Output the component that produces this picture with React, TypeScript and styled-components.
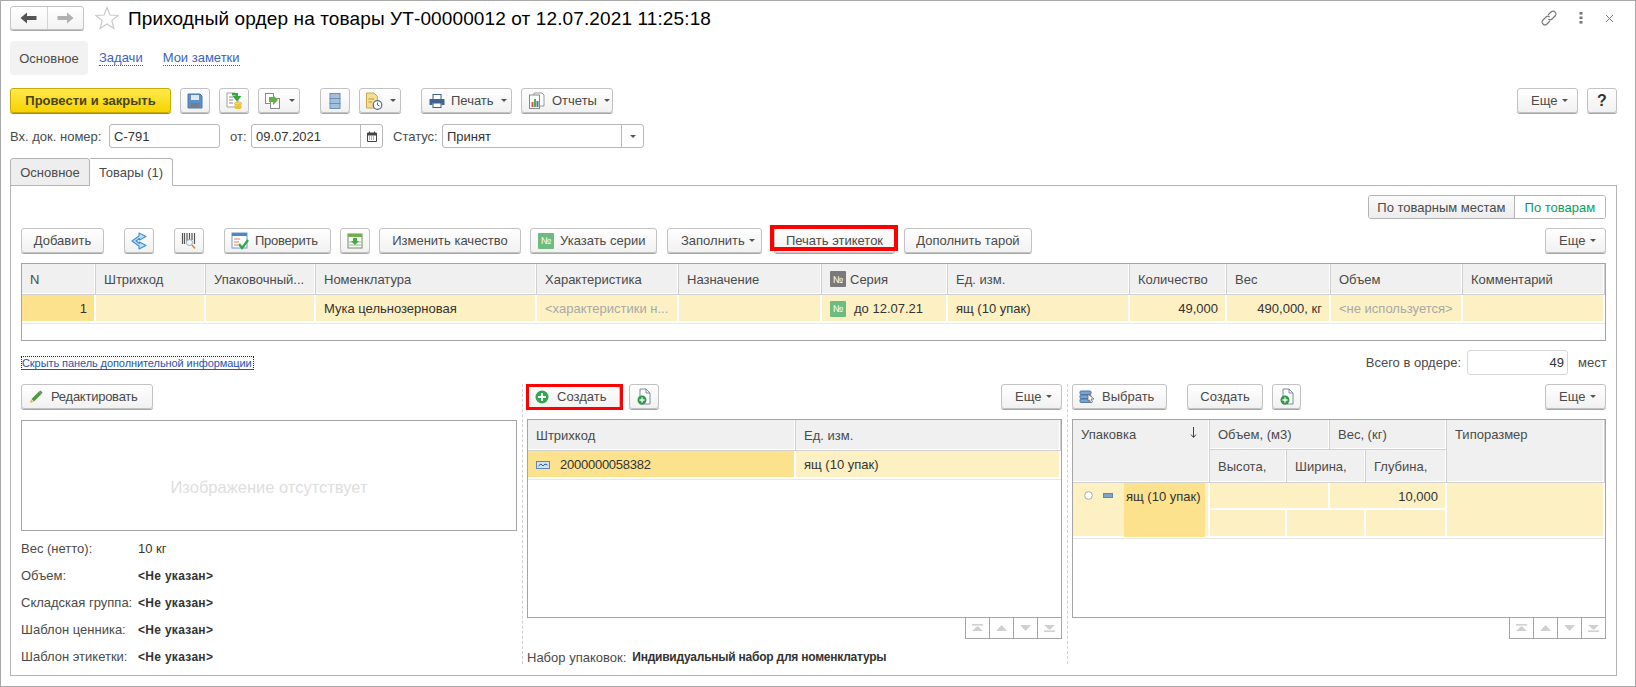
import React from "react";
import styled, { createGlobalStyle } from "styled-components";

const Global = createGlobalStyle`
  html, body { margin: 0; padding: 0; background: #fff; }
  body { font-family: "Liberation Sans", Arial, sans-serif; font-size: 13px; color: #4a4a4a; }
  * { box-sizing: border-box; }
`;

const Frame = styled.div`
  width: 1636px; height: 687px; border: 1px solid #a9a9a9; background: #fff;
  display: flex; flex-direction: column; overflow: hidden;
`;
const TitleRow = styled.div`
  display: flex; align-items: center; height: 24px; margin-top: 5px; padding: 0 21px 0 9px;
`;
const NavPair = styled.div`
  display: flex; width: 74px; height: 24px; border: 1px solid #c4c4c4; border-radius: 3px;
  background: linear-gradient(#fff, #f3f3f3); box-shadow: 0 1px 0 #a8a8a8;
`;
const NavPart = styled.div<{ $line?: boolean }>`
  flex: 1; display: flex; align-items: center; justify-content: center;
  border-left: ${(p) => (p.$line ? "1px solid #d4d4d4" : "none")};
`;
const StarBox = styled.div`margin: 0 9px 0 11px; display: flex;`;
const Title = styled.div`font-size: 19px; color: #000; white-space: nowrap; letter-spacing: 0.12px; padding-top: 2px;`;
const TitleTools = styled.div`margin-left: auto; display: flex; align-items: center; gap: 22px;`;
const NavTabs = styled.div`display: flex; align-items: center; margin: 11px 0 0 9px; height: 34px;`;
const NavActive = styled.div`
  width: 78px; height: 34px; background: #f2f2f2; border-radius: 4px; display: flex; align-items: center;
  justify-content: center; color: #4a4a4a;
`;
const NavLink = styled.span<{ $ml: number }>`
  margin-left: ${(p) => p.$ml}px; color: #3a62c4; border-bottom: 1px dotted #3a62c4; line-height: 14px;
`;
const Toolbar = styled.div`
  display: flex; gap: 20px; height: 27px; margin-top: 13px; padding: 0 18px 0 9px;
`;
const Group = styled.div<{ $right?: boolean }>`
  display: flex; gap: 9px; ${(p) => (p.$right ? "margin-left: auto;" : "")}
`;
const Btn = styled.div<{ $w: number; $primary?: boolean; $pad?: number; $gap?: number; $ml?: number; $tight?: boolean }>`
  position: relative; flex: none; width: ${(p) => p.$w}px; height: 25px; border-radius: 3px; border: 1px solid #c2c2c2;
  display: flex; align-items: center; justify-content: ${(p) => (p.$pad !== undefined ? "flex-start" : "center")};
  padding-left: ${(p) => p.$pad ?? 0}px;
  margin-left: ${(p) => p.$ml ?? 0}px;
  gap: ${(p) => p.$gap ?? 6}px; color: #4a4a4a; white-space: nowrap;
  letter-spacing: ${(p) => (p.$tight ? "-0.25px" : "0")};
  background: linear-gradient(#fff, #f1f1f1); box-shadow: 0 1px 0 #a6a6a6;
  ${(p) =>
    p.$primary
      ? `background: linear-gradient(#ffe94d, #f7d300); border-color: #c9ab00; box-shadow: 0 1px 0 #a98f00; color: #4a4312; font-weight: bold; font-size: 13px;`
      : ""}
`;
const Caret = styled.span`
  width: 0; height: 0; margin-left: 1px; border-left: 3px solid transparent; border-right: 3px solid transparent;
  border-top: 3px solid #555;
`;
const Mark = styled.div<{ $inset: string; $w: number }>`
  position: absolute; inset: ${(p) => p.$inset}; border: ${(p) => p.$w}px solid #f00; pointer-events: none;
`;
const Fields = styled.div`display: flex; gap: 10px; height: 24px; margin-top: 9px; padding-left: 9px;`;
const FieldGroup = styled.div`display: flex; align-items: center; gap: 5px;`;
const FieldLabel = styled.span<{ $w: number }>`width: ${(p) => p.$w}px; white-space: nowrap;`;
const Input = styled.div<{ $w: number; $total?: boolean }>`
  width: ${(p) => p.$w}px; height: ${(p) => (p.$total ? 25 : 24)}px; border: 1px solid ${(p) => (p.$total ? "#d6d6d6" : "#b8b8b8")}; border-radius: 3px; background: #fff;
  display: flex; align-items: center; color: #333;
  padding: 0 ${(p) => (p.$total ? "3px" : "0")} 0 4px; justify-content: ${(p) => (p.$total ? "flex-end" : "flex-start")};
`;
const InputBtn = styled.div`
  margin-left: auto; width: 22px; height: 100%; border-left: 1px solid #b8b8b8;
  display: flex; align-items: center; justify-content: center;
  & > span { margin-left: 0; }
`;
const TabRow = styled.div`display: flex; height: 28px; margin-top: 10px; padding-left: 9px; position: relative; z-index: 1;`;
const Tab = styled.div<{ $active?: boolean }>`
  height: 28px; width: ${(p) => (p.$active ? 83 : 80)}px; display: flex; align-items: center; justify-content: center;
  border: 1px solid #b4b4b4; border-left: ${(p) => (p.$active ? "none" : "1px solid #b4b4b4")};
  border-top-left-radius: ${(p) => (p.$active ? 0 : 3)}px; border-top-right-radius: 3px;
  background: ${(p) => (p.$active ? "#fff" : "#eeeeee")};
  border-bottom-color: ${(p) => (p.$active ? "#fff" : "#b4b4b4")};
`;
const Panel = styled.div`
  margin: -1px 18px 0 9px; height: 491px; border: 1px solid #b4b4b4; padding: 9px 10px 0 10px;
  display: flex; flex-direction: column;
`;
const ToggleRow = styled.div`display: flex; justify-content: flex-end; height: 24px;`;
const ToggleBox = styled.div`
  display: flex; width: 238px; height: 24px; border: 1px solid #b4b4b4; border-radius: 3px; overflow: hidden;
`;
const ToggleItem = styled.div<{ $on?: boolean }>`
  display: flex; align-items: center; justify-content: center; width: ${(p) => (p.$on ? 92 : 146)}px;
  color: ${(p) => (p.$on ? "#0c9c5c" : "#4a4a4a")};
  background: ${(p) => (p.$on ? "#fff" : "linear-gradient(#fafafa, #ececec)")};
  border-left: ${(p) => (p.$on ? "1px solid #b4b4b4" : "none")};
`;
const PanelBar = styled.div`display: flex; gap: 20px; height: 27px; margin-top: 9px;`;
const TableBox = styled.div<{ $h: number }>`
  height: ${(p) => p.$h}px; border: 1px solid #a5a5a5; background: #fff; margin-top: 8px; overflow: hidden;
`;
const GridT = styled.div<{ $cols: string; $rows: string }>`
  display: grid; grid-template-columns: ${(p) => p.$cols}; grid-template-rows: ${(p) => p.$rows};
`;
const Cell = styled.div<{ $area?: string; $tone?: "head" | "row" | "cur"; $right?: boolean; $muted?: boolean; $top?: boolean; $pl?: number; $gap?: number }>`
  ${(p) => (p.$area ? `grid-area: ${p.$area};` : "")}
  display: flex; align-items: ${(p) => (p.$top ? "flex-start" : "center")};
  justify-content: ${(p) => (p.$right ? "flex-end" : "flex-start")};
  padding: ${(p) => (p.$top ? "7px" : "0")} ${(p) => (p.$right ? "8px" : "0")} 0 ${(p) => p.$pl ?? 8}px;
  white-space: nowrap; overflow: hidden;
  color: ${(p) => (p.$muted ? "#a8a8a8" : p.$tone === "head" ? "#4a4a4a" : "#333")};
  background: ${(p) => (p.$tone === "head" ? "#f0f0f0" : p.$tone === "cur" ? "#fde28d" : "#fdf1c3")};
  border-right: 1px solid ${(p) => (p.$tone === "head" ? "#d0d0d0" : "#fff")};
  border-bottom: 1px solid ${(p) => (p.$tone === "head" ? "#d0d0d0" : "#fff")};
  box-shadow: inset -1px 0 0 #fff, inset 0 -1px 0 #fff;
  gap: ${(p) => p.$gap ?? 6}px;
`;
const PackCell = styled(Cell)`
  align-items: stretch; padding: 0; border-bottom: 1px solid #fff; gap: 0;
`;
const PackMarks = styled.div`
  display: flex; align-items: center; gap: 10px; height: 9px; margin: 8px 11px 0 11px; width: 29px;
`;
const PackName = styled.div`
  width: 81px; background: #fde28d; padding: 6px 0 0 2px; color: #333; white-space: nowrap; overflow: hidden;
`;
const SortMark = styled.span`margin-left: 48px;`;
const BarNumber = styled.span`letter-spacing: -0.25px;`;
const RowEnd = styled.div`height: 1px; background: #e6e6e6;`;
const LinkRow = styled.div`display: flex; align-items: center; height: 25px; margin-top: 9px;`;
const FocusLink = styled.span`
  font-size: 11px; letter-spacing: -0.08px; color: #2454b4; border: 1px dotted #222; border-bottom: 1px solid #2454b4; line-height: 12px; white-space: nowrap; padding-right: 1px;
`;
const TotalGroup = styled.div`margin-left: auto; display: flex; align-items: center; gap: 6px;`;
const Unit = styled.span`margin-left: 4px; width: 28px;`;
const Lower = styled.div`display: flex; margin-top: 9px;`;
const Column = styled.div<{ $w: number }>`width: ${(p) => p.$w}px; flex: none; display: flex; flex-direction: column;`;
const ColumnBar = styled.div`display: flex; gap: 9px; height: 26px;`;
const Divider = styled.div`
  flex: none; width: 1px; height: 280px; margin: 0 4px 0 5px; border-left: 1px dashed #cfcfcf;
`;
const NoImage = styled.div`
  height: 111px; margin-top: 10px; border: 1px solid #a5a5a5; display: flex; align-items: flex-end; justify-content: center;
  padding-bottom: 33px; color: #dedede; font-size: 16.5px;
`;
const InfoList = styled.div`display: flex; flex-direction: column; margin-top: 4px;`;
const InfoRow = styled.div`display: flex; align-items: center; height: 27px;`;
const InfoName = styled.span`width: 117px;`;
const InfoValue = styled.span<{ $bold?: boolean }>`
  color: #333; ${(p) => (p.$bold ? "font-weight: bold; font-size: 12px; letter-spacing: 0.3px;" : "")}
`;
const PackValue = styled.span`color: #333; font-weight: bold; font-size: 12px; letter-spacing: -0.23px;`;
const LowerTable = styled(TableBox)`height: 199px; margin-top: 9px;`;
const Pager = styled.div`display: flex; justify-content: flex-end; margin-top: -1px;`;
const PagerBtn = styled.div`
  width: 25px; height: 22px; margin-left: -1px; border: 1px solid #a5a5a5; display: flex; align-items: center; justify-content: center; background: #fff;
`;
const PackSet = styled.div`display: flex; align-items: center; gap: 6px; margin-top: 8px; height: 20px;`;
const Spacer = styled.div`margin-left: auto;`;
const NumBadge = styled.span<{ $gray?: boolean }>`
  width: 16px; height: 16px; flex: none; border-radius: 1px; background: ${(p) => (p.$gray ? "#7a7a7a" : "#6dbb7f")};
  color: #fff; font-size: 10px; display: inline-flex; align-items: center; justify-content: center;
`;
const Question = styled.span`font-size: 16px; font-weight: bold; color: #333;`;

const S = ({ w = 16, h = 16, children }: { w?: number; h?: number; children: React.ReactNode }) => (
  <svg width={w} height={h} viewBox={`0 0 ${w} ${h}`} style={{ flex: "none", display: "block" }}>{children}</svg>
);
const ArrowL = () => <S w={17} h={12}><path d="M0.5 6 L7 0.5 V4 H16.5 V8 H7 V11.5 Z" fill="#555" /></S>;
const ArrowR = () => <S w={17} h={12}><path d="M16.5 6 L10 0.5 V4 H0.5 V8 H10 V11.5 Z" fill="#b0b0b0" /></S>;
const Star = () => <S w={24} h={24}><path d="M12 1.5 L15 9 L23 9.5 L16.8 14.6 L18.9 22.5 L12 18 L5.1 22.5 L7.2 14.6 L1 9.5 L9 9 Z" fill="#fff" stroke="#c9c9c9" strokeWidth="1.2" /></S>;
const Link = () => <S w={16} h={16}><g fill="none" stroke="#777" strokeWidth="1.1"><path d="M7 5 L10 2 a2.6 2.6 0 0 1 4 4 L11 9 a2.6 2.6 0 0 1 -3.6 0" /><path d="M9 11 L6 14 a2.6 2.6 0 0 1 -4 -4 L5 7 a2.6 2.6 0 0 1 3.6 0" /></g></S>;
const Dots = () => <S w={4} h={12}><g fill="#777"><rect x="0.5" y="0" width="3" height="2.6" /><rect x="0.5" y="4.5" width="3" height="2.6" /><rect x="0.5" y="9" width="3" height="2.6" /></g></S>;
const Cross = () => <S w={9} h={9}><path d="M1 1 L8 8 M8 1 L1 8" stroke="#777" strokeWidth="1" /></S>;
const Floppy = () => <S><path d="M1 1 H13 L15 3 V15 H1 Z" fill="#5f8fc4" stroke="#4a78ac" /><rect x="4" y="2" width="8" height="5" fill="#dbe8f5" /><rect x="3.5" y="10" width="9" height="5" fill="#6f7f90" /></S>;
const PostIcon = () => <S w={18} h={18}><path d="M2 1 H10 L13 4 V15 H2 Z" fill="#fff" stroke="#a0a0a0" /><path d="M4 5 H8 M4 8 H8 M4 11 H8" stroke="#888" /><path d="M7 1 H13 V4 H16.5 L12 9.5 L7.5 4 H10.5 V3.5 H7 Z" fill="#35a83a" /><ellipse cx="13" cy="11.5" rx="3.5" ry="1.6" fill="#f5d75a" stroke="#c9a020" strokeWidth="0.6" /><path d="M9.5 12 V15.5 A3.5 1.6 0 0 0 16.5 15.5 V12 A3.5 1.6 0 0 1 9.5 12 Z" fill="#eebf2e" /></S>;
const CopyIcon = () => <S w={18} h={18}><rect x="1.5" y="1.5" width="8" height="10" fill="#fff" stroke="#8a8a8a" /><rect x="6.5" y="6.5" width="9" height="10" fill="#fff" stroke="#8a8a8a" /><path d="M3 4 H7 V2 L12 7 L7 12 V9 H3 Z" fill="#5db53f" transform="translate(2 1)" /></S>;
const StackIcon = () => <S w={12} h={18}><rect x="1" y="1.5" width="10" height="5" fill="#a5bfda" stroke="#6b8fb5" /><rect x="1" y="6.5" width="10" height="5" fill="#a5bfda" stroke="#6b8fb5" /><rect x="1" y="11.5" width="10" height="5" fill="#a5bfda" stroke="#6b8fb5" /></S>;
const ClockDoc = () => <S w={18} h={18}><path d="M1.5 1 H9 L12.5 4.5 V16 H1.5 Z" fill="#f6dd94" stroke="#c9a64a" /><path d="M3.5 7 H9 M3.5 10 H7" stroke="#b8964a" /><circle cx="12.5" cy="13" r="4.3" fill="#fff" stroke="#4d6f9e" strokeWidth="1.2" /><path d="M12.5 10.5 V13 L14.5 14" stroke="#d33" fill="none" /></S>;
const Printer = () => <S w={16} h={14}><rect x="4" y="0.5" width="8" height="5" fill="#fff" stroke="#3f5f85" /><path d="M0.5 5 H15.5 V11 H12.5 V9 H3.5 V11 H0.5 Z" fill="#3f6391" /><rect x="4" y="9" width="8" height="4.5" fill="#fff" stroke="#3f5f85" /></S>;
const Reports = () => <S w={18} h={18}><path d="M6 3 V1 H14 L16 3 V14 H12" fill="#fff" stroke="#9a9a9a" /><rect x="1.5" y="3" width="10" height="13.5" fill="#fff" stroke="#8a8a8a" /><rect x="3.5" y="10" width="2" height="5" fill="#d9534f" /><rect x="6" y="7" width="2" height="8" fill="#4caf50" /><rect x="8.5" y="9" width="2" height="6" fill="#4a78ac" /></S>;
const Share = () => <S w={16} h={18}><path d="M1 9 L8 4 V1 L15 4.5 L8.5 8 V6.5 L5 9 L8.5 11.5 V10 L15 13.5 L8 17 V14 Z" fill="#bfe0f7" stroke="#3f8fd6" strokeWidth="1.1" strokeLinejoin="round" /></S>;
const BarSearch = () => <S w={16} h={18}><path d="M1.5 1 V12 M3.5 1 V12 M6 1 V9 M8.5 1 V8 M11 1 V8 M13.5 1 V12" stroke="#555" strokeWidth="1.2" /><circle cx="8.5" cy="10.5" r="3" fill="#f5f5f5" stroke="#8fa8c4" /><path d="M11 13 L14 16.5" stroke="#c88a45" strokeWidth="1.6" /></S>;
const CheckList = () => <S w={18} h={18}><rect x="1" y="1" width="15" height="15" fill="#fff" stroke="#6a9ad0" /><rect x="1" y="1" width="15" height="3" fill="#4f86c9" /><path d="M3 7 H9 M3 10 H8 M3 13 H7" stroke="#e07a5f" /><path d="M8 12 L11 16 L17 8" stroke="#3aa54a" strokeWidth="2.4" fill="none" /></S>;
const TableArrow = () => <S w={16} h={16}><rect x="1" y="1" width="14" height="14" fill="#fff" stroke="#6b8f5a" /><rect x="1" y="1" width="14" height="3" fill="#73b04f" /><path d="M2 9 H14 M2 12 H14" stroke="#9aaf8f" /><path d="M6 5 H10 V8 H12 L8 12 L4 8 H6 Z" fill="#3fae3f" /></S>;
const Pencil = () => <S w={14} h={14}><path d="M1 13 L2 9.5 L4.5 12 Z" fill="#e8b04a" /><path d="M2.5 9 L10 1.5 L12.5 4 L5 11.5 Z" fill="#4f9a3e" /><path d="M10 1.5 L11.5 0.5 L13.5 2.5 L12.5 4 Z" fill="#777" /></S>;
const Plus = () => <S w={14} h={14}><circle cx="7" cy="7" r="6.5" fill="#2fa84f" /><path d="M7 3 V11 M3 7 H11" stroke="#fff" strokeWidth="2" /></S>;
const DocPlus = () => <S w={14} h={18}><path d="M3 1 H9 L13 5 V16 H3 Z" fill="#fff" stroke="#7a8a9a" /><path d="M9 1 V5 H13" fill="none" stroke="#7a8a9a" /><circle cx="5" cy="12" r="4.5" fill="#2d9b45" /><path d="M5 9.5 V14.5 M2.5 12 H7.5" stroke="#fff" strokeWidth="1.4" /></S>;
const BarCell = () => <S w={14} h={8}><rect x="0.5" y="0.5" width="13" height="7" fill="#cfe1f3" stroke="#5d86b4" /><path d="M2.5 5 L5 3 L7 5 L9 3 L11.5 4" stroke="#2f5c8f" fill="none" /></S>;
const Select = () => <S w={16} h={15}><rect x="1" y="2" width="11" height="3.5" rx="1" fill="#7ba3cf" stroke="#4d79a8" /><rect x="1" y="6" width="11" height="3.5" rx="1" fill="#7ba3cf" stroke="#4d79a8" /><rect x="1" y="10" width="11" height="3.5" rx="1" fill="#7ba3cf" stroke="#4d79a8" /><path d="M9 5 L15 10 H12 L13.5 13 L12 14 L10.5 11 L9 12 Z" fill="#fff" stroke="#666" strokeWidth="0.8" /></S>;
const Calendar = () => <S w={10} h={11}><path d="M0.5 2 H9.5 V10.5 H0.5 Z" fill="#fff" stroke="#444" /><rect x="0.5" y="2" width="9" height="2.5" fill="#444" /><path d="M2 6 H8 M2 8 H8" stroke="#666" strokeDasharray="1 1" /><path d="M2.5 0.5 V2 M7.5 0.5 V2" stroke="#444" /></S>;
const Radio = () => <S w={9} h={9}><circle cx="4.5" cy="4.5" r="3.8" fill="#fff" stroke="#aaa" /></S>;
const Dash = () => <S w={10} h={5}><rect x="0.5" y="0.5" width="9" height="4" fill="#7ea3c9" stroke="#5d86b4" /></S>;
const DownArrow = () => <S w={7} h={11}><path d="M3.5 0 V10 M1 7.5 L3.5 10.5 L6 7.5" stroke="#444" fill="none" /></S>;
const PageFirst = () => <S w={11} h={8}><path d="M0 0 H11 V1.5 H0 Z M5.5 2 L11 7 H0 Z" fill="#cfcfcf" /></S>;
const PageUp = () => <S w={11} h={6}><path d="M5.5 0 L11 6 H0 Z" fill="#cfcfcf" /></S>;
const PageDown = () => <S w={11} h={6}><path d="M5.5 6 L11 0 H0 Z" fill="#cfcfcf" /></S>;
const PageLast = () => <S w={11} h={8}><path d="M0 8 H11 V6.5 H0 Z M5.5 6 L11 1 H0 Z" fill="#cfcfcf" /></S>;

const PagerSet = () => (
  <Pager>
    <PagerBtn><PageFirst /></PagerBtn>
    <PagerBtn><PageUp /></PagerBtn>
    <PagerBtn><PageDown /></PagerBtn>
    <PagerBtn><PageLast /></PagerBtn>
  </Pager>
);

const More = () => (
  <Btn $w={61} $pad={13} $gap={4}>Еще <Caret /></Btn>
);

export default function App() {
  return (
    <Frame>
      <Global />
      <TitleRow>
        <NavPair>
          <NavPart><ArrowL /></NavPart>
          <NavPart $line><ArrowR /></NavPart>
        </NavPair>
        <StarBox><Star /></StarBox>
        <Title>Приходный ордер на товары УТ-00000012 от 12.07.2021 11:25:18</Title>
        <TitleTools><Link /><Dots /><Cross /></TitleTools>
      </TitleRow>
      <NavTabs>
        <NavActive>Основное</NavActive>
        <NavLink $ml={11}>Задачи</NavLink>
        <NavLink $ml={20}>Мои заметки</NavLink>
      </NavTabs>
      <Toolbar>
        <Group>
          <Btn $w={161} $primary>Провести и закрыть</Btn>
          <Btn $w={30}><Floppy /></Btn>
          <Btn $w={30}><PostIcon /></Btn>
          <Btn $w={42}><CopyIcon /><Caret /></Btn>
        </Group>
        <Group>
          <Btn $w={30}><StackIcon /></Btn>
          <Btn $w={42}><ClockDoc /><Caret /></Btn>
        </Group>
        <Group>
          <Btn $w={91} $pad={7}><Printer />Печать <Caret /></Btn>
          <Btn $w={92} $pad={6}><Reports />Отчеты <Caret /></Btn>
        </Group>
        <Group $right>
          <More />
          <Btn $w={30}><Question>?</Question></Btn>
        </Group>
      </Toolbar>
      <Fields>
        <FieldGroup>
          <FieldLabel $w={94}>Вх. док. номер:</FieldLabel>
          <Input $w={111}>С-791</Input>
        </FieldGroup>
        <FieldGroup>
          <FieldLabel $w={16}>от:</FieldLabel>
          <Input $w={132}>09.07.2021<InputBtn><Calendar /></InputBtn></Input>
        </FieldGroup>
        <FieldGroup>
          <FieldLabel $w={44}>Статус:</FieldLabel>
          <Input $w={202}>Принят<InputBtn><Caret /></InputBtn></Input>
        </FieldGroup>
      </Fields>
      <TabRow>
        <Tab>Основное</Tab>
        <Tab $active>Товары (1)</Tab>
      </TabRow>
      <Panel>
        <ToggleRow>
          <ToggleBox>
            <ToggleItem>По товарным местам</ToggleItem>
            <ToggleItem $on>По товарам</ToggleItem>
          </ToggleBox>
        </ToggleRow>
        <PanelBar>
          <Btn $w={83}>Добавить</Btn>
          <Btn $w={30}><Share /></Btn>
          <Btn $w={30}><BarSearch /></Btn>
          <Group>
            <Btn $w={107} $pad={6} $tight><CheckList />Проверить</Btn>
            <Btn $w={30}><TableArrow /></Btn>
            <Btn $w={142}>Изменить качество</Btn>
            <Btn $w={127} $pad={7}><NumBadge>№</NumBadge>Указать серии</Btn>
            <Btn $w={95} $pad={13} $ml={1} $gap={3}>Заполнить <Caret /></Btn>
            <Btn $w={121} $ml={3}>Печать этикеток<Mark $inset="-4px -4px 1px -5px" $w={4} /></Btn>
            <Btn $w={128}>Дополнить тарой</Btn>
          </Group>
          <Spacer />
          <More />
        </PanelBar>
        <TableBox $h={78}>
          <GridT $cols="74px 110px 110px 221px 142px 143px 126px 182px 97px 104px 132px 1fr" $rows="31px 28px">
            <Cell $tone="head">N</Cell>
            <Cell $tone="head">Штрихкод</Cell>
            <Cell $tone="head">Упаковочный...</Cell>
            <Cell $tone="head">Номенклатура</Cell>
            <Cell $tone="head">Характеристика</Cell>
            <Cell $tone="head">Назначение</Cell>
            <Cell $tone="head" $gap={4}><NumBadge $gray>№</NumBadge>Серия</Cell>
            <Cell $tone="head">Ед. изм.</Cell>
            <Cell $tone="head">Количество</Cell>
            <Cell $tone="head">Вес</Cell>
            <Cell $tone="head">Объем</Cell>
            <Cell $tone="head">Комментарий</Cell>
            <Cell $tone="cur" $right>1</Cell>
            <Cell $tone="row" />
            <Cell $tone="row" />
            <Cell $tone="row">Мука цельнозерновая</Cell>
            <Cell $tone="row" $muted>&lt;характеристики н...</Cell>
            <Cell $tone="row" />
            <Cell $tone="row" $gap={8}><NumBadge>№</NumBadge>до 12.07.21</Cell>
            <Cell $tone="row">ящ (10 упак)</Cell>
            <Cell $tone="row" $right>49,000</Cell>
            <Cell $tone="row" $right>490,000, кг</Cell>
            <Cell $tone="row" $muted>&lt;не используется&gt;</Cell>
            <Cell $tone="row" />
          </GridT>
          <RowEnd />
        </TableBox>
        <LinkRow>
          <FocusLink>Скрыть панель дополнительной информации</FocusLink>
          <TotalGroup>
            <span>Всего в ордере:</span>
            <Input $w={101} $total>49</Input>
            <Unit>мест</Unit>
          </TotalGroup>
        </LinkRow>
        <Lower>
          <Column $w={496}>
            <ColumnBar><Btn $w={132} $pad={7} $gap={8} $tight><Pencil />Редактировать</Btn></ColumnBar>
            <NoImage>Изображение отсутствует</NoImage>
            <InfoList>
              <InfoRow><InfoName>Вес (нетто):</InfoName><InfoValue>10 кг</InfoValue></InfoRow>
              <InfoRow><InfoName>Объем:</InfoName><InfoValue $bold>&lt;Не указан&gt;</InfoValue></InfoRow>
              <InfoRow><InfoName>Складская группа:</InfoName><InfoValue $bold>&lt;Не указан&gt;</InfoValue></InfoRow>
              <InfoRow><InfoName>Шаблон ценника:</InfoName><InfoValue $bold>&lt;Не указан&gt;</InfoValue></InfoRow>
              <InfoRow><InfoName>Шаблон этикетки:</InfoName><InfoValue $bold>&lt;Не указан&gt;</InfoValue></InfoRow>
            </InfoList>
          </Column>
          <Divider />
          <Column $w={535}>
            <ColumnBar>
              <Btn $w={93} $pad={7} $gap={8}><Plus />Создать<Mark $inset="-1px -4px -2px -2px" $w={3} /></Btn>
              <Btn $w={30}><DocPlus /></Btn>
              <Spacer />
              <More />
            </ColumnBar>
            <LowerTable $h={199}>
              <GridT $cols="268px 1fr" $rows="31px 28px">
                <Cell $tone="head">Штрихкод</Cell>
                <Cell $tone="head">Ед. изм.</Cell>
                <Cell $tone="cur" $gap={10}><BarCell /><BarNumber>2000000058382</BarNumber></Cell>
                <Cell $tone="row">ящ (10 упак)</Cell>
              </GridT>
              <RowEnd />
            </LowerTable>
            <PagerSet />
            <PackSet>
              <span>Набор упаковок:</span>
              <PackValue>Индивидуальный набор для номенклатуры</PackValue>
            </PackSet>
          </Column>
          <Divider />
          <Column $w={534}>
            <ColumnBar>
              <Btn $w={95} $pad={6} $gap={7}><Select />Выбрать</Btn>
              <Btn $w={76} $ml={11}>Создать</Btn>
              <Btn $w={29}><DocPlus /></Btn>
              <Spacer />
              <More />
            </ColumnBar>
            <LowerTable $h={199}>
              <GridT $cols="137px 77px 43px 36px 81px 1fr" $rows="30px 33px 27px 28px">
                <Cell $tone="head" $area="1 / 1 / 3 / 2" $top>Упаковка<SortMark><DownArrow /></SortMark></Cell>
                <Cell $tone="head" $area="1 / 2 / 2 / 4">Объем, (м3)</Cell>
                <Cell $tone="head" $area="1 / 4 / 2 / 6">Вес, (кг)</Cell>
                <Cell $tone="head" $area="1 / 6 / 3 / 7" $top>Типоразмер</Cell>
                <Cell $tone="head" $area="2 / 2 / 3 / 3">Высота,</Cell>
                <Cell $tone="head" $area="2 / 3 / 3 / 5">Ширина,</Cell>
                <Cell $tone="head" $area="2 / 5 / 3 / 6">Глубина,</Cell>
                <PackCell $tone="row" $area="3 / 1 / 5 / 2">
                  <PackMarks><Radio /><Dash /></PackMarks>
                  <PackName>ящ (10 упак)</PackName>
                </PackCell>
                <Cell $tone="row" $area="3 / 2 / 4 / 4" />
                <Cell $tone="row" $area="3 / 4 / 4 / 6" $right>10,000</Cell>
                <Cell $tone="row" $area="3 / 6 / 5 / 7" />
                <Cell $tone="row" $area="4 / 2 / 5 / 3" />
                <Cell $tone="row" $area="4 / 3 / 5 / 5" />
                <Cell $tone="row" $area="4 / 5 / 5 / 6" />
              </GridT>
              <RowEnd />
            </LowerTable>
            <PagerSet />
          </Column>
        </Lower>
      </Panel>
    </Frame>
  );
}
